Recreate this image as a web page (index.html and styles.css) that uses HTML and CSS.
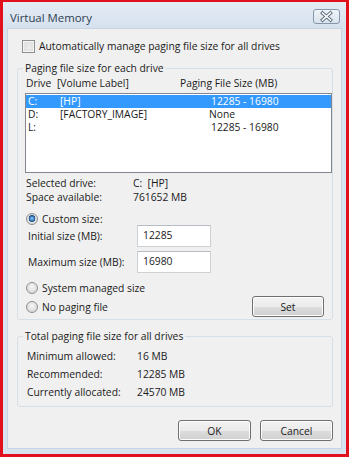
FILE: index.html
```html
<!DOCTYPE html>
<html lang="en">
  <head>
    <meta charset="UTF-8" />
    <title>Virtual Memory</title>
    <link rel="stylesheet" href="styles.css">
  </head>
  <body>
    <div class="window">
      <div class="titlebar">
        <span class="title">Virtual Memory</span>
        <button class="close-btn">
          <svg width="27" height="15" viewBox="0 0 27 15">
            <path d="M9.5 4 L17.5 11 M17.5 4 L9.5 11" stroke="#5a6a7e" stroke-width="3.4" stroke-linecap="square" fill="none" />
            <path d="M9.5 4 L17.5 11 M17.5 4 L9.5 11" stroke="#ffffff" stroke-width="1.6" stroke-linecap="square" fill="none" />
          </svg>
        </button>
      </div>

      <div class="client">
        <label class="check-row">
          <span class="checkbox"></span>
          Automatically manage paging file size for all drives
        </label>

        <!-- per drive settings -->
        <fieldset class="group drives">
          <legend>Paging file size for each drive</legend>
          <div class="list-head">
            <span>Drive</span>
            <span>[Volume Label]</span>
            <span>Paging File Size (MB)</span>
          </div>
          <div class="listbox">
            <div class="row selected"><span>C:</span><span>[HP]</span><span>12285 - 16980</span></div>
            <div class="row"><span>D:</span><span>[FACTORY_IMAGE]</span><span class="none">None</span></div>
            <div class="row"><span>L:</span><span></span><span>12285 - 16980</span></div>
          </div>
          <div class="info">
            <span>Selected drive:</span><span>C:&nbsp; [HP]</span>
            <span>Space available:</span><span>761652 MB</span>
          </div>
          <label class="radio-row custom">
            <span class="radio checked"></span>Custom size:
          </label>
          <div class="size-row">
            <label>Initial size (MB):</label>
            <input type="text" value="12285" />
          </div>
          <div class="size-row max">
            <label>Maximum size (MB):</label>
            <input type="text" value="16980" />
          </div>
          <label class="radio-row system">
            <span class="radio"></span>System managed size
          </label>
          <div class="nopaging-row">
            <label class="radio-row">
              <span class="radio"></span>No paging file
            </label>
            <button class="btn set-btn">Set</button>
          </div>
        </fieldset>

        <!-- totals -->
        <fieldset class="group totals">
          <legend>Total paging file size for all drives</legend>
          <div class="totals-grid">
            <span>Minimum allowed:</span><span>16 MB</span>
            <span>Recommended:</span><span>12285 MB</span>
            <span>Currently allocated:</span><span>24570 MB</span>
          </div>
        </fieldset>

        <div class="dialog-buttons">
          <button class="btn">OK</button>
          <button class="btn">Cancel</button>
        </div>
      </div>
    </div>
  </body>
</html>
```

FILE: styles.css
```css
* {
  box-sizing: border-box;
}

body {
  margin: 0;
  background: #e2101c;
  font-family: "Open Sans", "Noto Sans", sans-serif;
  font-size: 10.3px;
  color: #1a1a1a;
}

.window {
  margin: 2px 3px 3px 3px;
  width: 343px;
  height: 452px;
  background: #d8e3f0;
  display: flex;
  flex-direction: column;
}

.titlebar {
  height: 27px;
  display: flex;
  justify-content: space-between;
  align-items: flex-start;
  padding: 0 6px 0 7px;
  background: linear-gradient(#e4ecf5, #d5e1ee);
}

.title {
  font-size: 11.4px;
  line-height: 15px;
  margin-top: 8px;
  color: #2e3d50;
}

.close-btn {
  margin-top: 7px;
  width: 27px;
  height: 15px;
  padding: 0;
  border: 1px solid #8797ab;
  border-radius: 3px;
  background: linear-gradient(#f0f4f9, #d9e2ec);
  display: flex;
}

.close-btn svg {
  margin: -1px;
}

.client {
  margin: 0 5px;
  height: 419px;
  background: #f0f0f0;
  box-shadow: 0 0 0 1px #c6d4e4;
  padding-top: 11px;
  display: flex;
  flex-direction: column;
}

.check-row {
  display: flex;
  align-items: center;
  gap: 4px;
  margin-left: 14px;
  height: 13px;
  line-height: 13px;
}

.checkbox {
  width: 13px;
  height: 13px;
  border: 1px solid #8e8f8f;
  background: #fff;
  box-shadow: inset 0 0 0 1px #f4f4f4, inset 0 0 0 3px #e3e3e3;
  background-image: linear-gradient(135deg, #d6d6d6, #fbfbfb);
}

.group {
  margin: 8px 8px 0 9px;
  padding: 0 0 2px 7px;
  border: 1px solid #d5dfe5;
  border-radius: 3px;
  min-width: 0;
}

.group legend {
  padding: 0 2px;
  margin-left: -2px;
  line-height: 15px;
}

.list-head {
  display: grid;
  grid-template-columns: 31px 123px 1fr;
  padding-left: 1px;
  line-height: 14px;
}

.listbox {
  margin-top: 3px;
  height: 80px;
  border: 1px solid #828790;
  background: #fff;
  padding: 1px 0;
}

.row {
  display: grid;
  grid-template-columns: 32px 151px 1fr;
  padding-left: 2px;
  height: 13px;
  line-height: 13px;
}

.row.selected {
  background: #3399ff;
  color: #fff;
}

.row .none {
  margin-left: -2px;
}

.info {
  display: grid;
  grid-template-columns: 107px 1fr;
  padding-left: 1px;
  margin-top: 3px;
  line-height: 14px;
}

.radio-row {
  display: flex;
  align-items: center;
  gap: 4px;
  padding-left: 1px;
  height: 14px;
  line-height: 14px;
}

.radio-row.custom {
  margin-top: 8px;
  height: 13px;
}

.radio-row.system {
  margin-top: 8px;
}

.radio {
  width: 12px;
  height: 12px;
  border-radius: 50%;
  border: 1px solid #8e8f8f;
  background: radial-gradient(circle at 50% 40%, #f6f6f6 0%, #e0e0e0 60%, #cfcfcf 100%);
}

.radio.checked {
  background:
    radial-gradient(circle at 50% 45%, #a4d4f5 0%, #3a7fc0 28%, #1d4f86 44%, transparent 48%),
    radial-gradient(circle, #f6f6f6 0%, #d4d4d4 100%);
}

.size-row {
  display: flex;
  align-items: center;
  height: 22px;
  padding-left: 3px;
}

.size-row.max {
  margin-top: 4px;
}

.size-row label {
  width: 109px;
}

.size-row input {
  width: 74px;
  height: 22px;
  border: 1px solid #ccd1d6;
  border-top-color: #b7bcc2;
  background: #fff;
  font: inherit;
  color: #1a1a1a;
  padding: 0 0 3px 5px;
}

.nopaging-row {
  margin-top: 1px;
  display: flex;
  justify-content: space-between;
  align-items: center;
  padding-right: 8px;
}

.btn {
  width: 73px;
  height: 21px;
  padding: 0;
  border: 1px solid #707070;
  border-radius: 3px;
  background: linear-gradient(#f2f2f2 0%, #ebebeb 50%, #dddddd 51%, #cfcfcf 100%);
  box-shadow: inset 0 0 0 1px #fcfcfc;
  font: inherit;
  color: #1a1a1a;
}

.set-btn {
  width: 72px;
}

.group.totals {
  margin-top: 9px;
  padding: 3px 0 5px 7px;
}

.totals-grid {
  display: grid;
  grid-template-columns: 110px 1fr;
  padding-left: 2px;
  line-height: 18px;
}

.dialog-buttons {
  margin-top: 13px;
  padding-right: 8px;
  display: flex;
  justify-content: flex-end;
  gap: 9px;
}
```
